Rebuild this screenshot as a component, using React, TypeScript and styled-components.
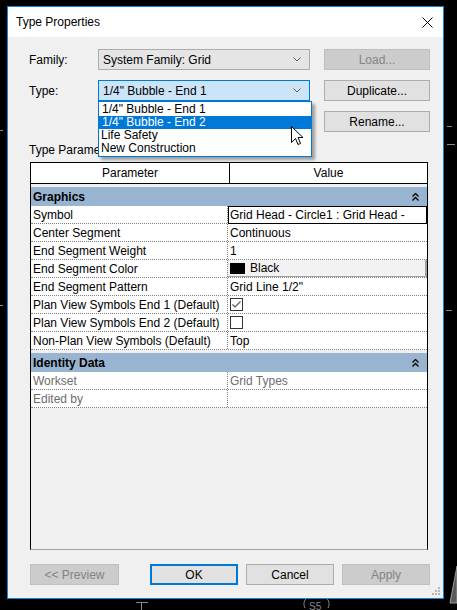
import React from 'react';
import styled, { createGlobalStyle } from 'styled-components';

const GlobalStyle = createGlobalStyle`
  html, body {
    margin: 0;
    padding: 0;
    background: #000;
  }
  body {
    font-family: "Liberation Sans", Arial, sans-serif;
    font-size: 12px;
    color: #000;
    overflow: hidden;
  }
  * {
    box-sizing: border-box;
  }
`;

interface ParamRow {
  name: string;
  value?: string;
  kind?: 'text' | 'editor' | 'color' | 'check' | 'uncheck';
  muted?: boolean;
}

interface ParamGroup {
  title: string;
  rows: ParamRow[];
}

const groups: ParamGroup[] = [
  {
    title: 'Graphics',
    rows: [
      { name: 'Symbol', value: 'Grid Head - Circle1 : Grid Head -', kind: 'editor' },
      { name: 'Center Segment', value: 'Continuous' },
      { name: 'End Segment Weight', value: '1' },
      { name: 'End Segment Color', value: 'Black', kind: 'color' },
      { name: 'End Segment Pattern', value: 'Grid Line 1/2"' },
      { name: 'Plan View Symbols End 1 (Default)', kind: 'check' },
      { name: 'Plan View Symbols End 2 (Default)', kind: 'uncheck' },
      { name: 'Non-Plan View Symbols (Default)', value: 'Top' },
    ],
  },
  {
    title: 'Identity Data',
    rows: [
      { name: 'Workset', value: 'Grid Types', muted: true },
      { name: 'Edited by', value: '', muted: true },
    ],
  },
];

const typeOptions = ['1/4" Bubble - End 1', '1/4" Bubble - End 2', 'Life Safety', 'New Construction'];

const App: React.FC = () => (
  <>
    <GlobalStyle />
    <Page>
      <Backdrop />
      <Window>
        <TitleBar>
          <span>Type Properties</span>
          <CloseIcon />
        </TitleBar>
        <Content>
          <FieldRow>
            <FieldLabel>Family:</FieldLabel>
            <Combo>
              <span>System Family: Grid</span>
              <Chevron />
            </Combo>
            <DialogButton disabled>Load...</DialogButton>
          </FieldRow>
          <FieldRow>
            <FieldLabel>Type:</FieldLabel>
            <Combo active>
              <span>1/4" Bubble - End 1</span>
              <Chevron />
              <DropList>
                {typeOptions.map((opt, i) => (
                  <DropItem key={opt} selected={i === 1} indent={i < 2}>
                    {opt}
                  </DropItem>
                ))}
              </DropList>
              <Cursor />
            </Combo>
            <DialogButton>Duplicate...</DialogButton>
          </FieldRow>
          <FieldRow>
            <Spacer />
            <DialogButton>Rename...</DialogButton>
          </FieldRow>
          <SectionLabel>Type Parameters</SectionLabel>
          <Table>
            <HeaderRow>
              <HeaderCell>Parameter</HeaderCell>
              <HeaderCell>Value</HeaderCell>
            </HeaderRow>
            {groups.map((g) => (
              <React.Fragment key={g.title}>
                <GroupBar>
                  <span>{g.title}</span>
                  <Collapse />
                </GroupBar>
                {g.rows.map((r) => (
                  <Row key={r.name}>
                    <NameCell muted={r.muted}>{r.name}</NameCell>
                    <ValueCell muted={r.muted} kind={r.kind}>
                      {r.kind === 'color' && <Swatch />}
                      {r.kind === 'check' && <CheckBox checked />}
                      {r.kind === 'uncheck' && <CheckBox />}
                      {r.value}
                    </ValueCell>
                  </Row>
                ))}
              </React.Fragment>
            ))}
          </Table>
          <ButtonBar>
            <DialogButton disabled wide>
              &lt;&lt; Preview
            </DialogButton>
            <ButtonGroup>
              <DialogButton primary>OK</DialogButton>
              <DialogButton>Cancel</DialogButton>
              <DialogButton disabled>Apply</DialogButton>
            </ButtonGroup>
          </ButtonBar>
          <Grip />
        </Content>
      </Window>
    </Page>
  </>
);

const Backdrop: React.FC = () => (
  <BackdropSvg width="457" height="610" viewBox="0 0 457 610">
    <g stroke="#8a8a8a" strokeWidth="1" fill="none">
      <path d="M0 130.5h3M0 305.5h3" />
      <path d="M447 126.5h5M447 144.5h8M446 310.5h6" />
      <path d="M136 602.5h12M141.5 602v8" />
      <path d="M305 608c-2-4-1-8 2-10M326 598c3 2 4 6 2 10" />
    </g>
    <text x="309" y="610" fill="#8a8a8a" fontSize="10" fontFamily="Liberation Sans, sans-serif">S5</text>
    <path d="M450 603 L457 566 L457 603 Z" fill="#5a5a5a" stroke="#9a9a9a" strokeWidth="1" />
  </BackdropSvg>
);

const CloseIcon: React.FC = () => (
  <svg width="11" height="11" viewBox="0 0 11 11">
    <path d="M0.5 0.5 L10.5 10.5 M10.5 0.5 L0.5 10.5" stroke="#000" strokeWidth="1" />
  </svg>
);

const Chevron: React.FC = () => (
  <ChevronSvg width="8" height="5" viewBox="0 0 8 5">
    <path d="M0.5 0.5 L4 4 L7.5 0.5" stroke="#606060" strokeWidth="1" fill="none" />
  </ChevronSvg>
);

const Collapse: React.FC = () => (
  <svg width="7" height="8" viewBox="0 0 7 8">
    <path d="M0.5 3.5 L3.5 0.5 L6.5 3.5 M0.5 7.5 L3.5 4.5 L6.5 7.5" stroke="#000" strokeWidth="1.3" fill="none" />
  </svg>
);

const Cursor: React.FC = () => (
  <CursorSvg width="13" height="21" viewBox="0 0 13 21">
    <path
      d="M0.5 0.5 L0.5 16.5 L4.5 12.5 L7 18.5 L9.5 17.5 L7 11.5 L12 11.5 Z"
      fill="#fff"
      stroke="#000"
      strokeWidth="1"
      strokeLinejoin="round"
    />
  </CursorSvg>
);

const CheckBox: React.FC<{ checked?: boolean }> = ({ checked }) => (
  <BoxSvg width="13" height="13" viewBox="0 0 13 13">
    <rect x="0.5" y="0.5" width="12" height="12" fill="#fff" stroke="#333" />
    {checked && <path d="M2.5 6.5 L5 9 L10.5 3.5" stroke="#555" strokeWidth="1.2" fill="none" />}
  </BoxSvg>
);

const Grip: React.FC = () => (
  <GripSvg width="8" height="8" viewBox="0 0 8 8">
    <g fill="#b8b8b8">
      <rect x="6" y="0" width="2" height="2" />
      <rect x="3" y="3" width="2" height="2" />
      <rect x="6" y="3" width="2" height="2" />
      <rect x="0" y="6" width="2" height="2" />
      <rect x="3" y="6" width="2" height="2" />
      <rect x="6" y="6" width="2" height="2" />
    </g>
  </GripSvg>
);

const Page = styled.div`
  position: relative;
  width: 457px;
  height: 610px;
  padding: 6px 0 0 7px;
`;

const BackdropSvg = styled.svg`
  position: absolute;
  left: 0;
  top: 0;
`;

const Window = styled.div`
  position: relative;
  width: 437px;
  height: 593px;
  border: 1px solid #1883d7;
  background: #f0f0f0;
  display: flex;
  flex-direction: column;
`;

const TitleBar = styled.div`
  height: 30px;
  flex: none;
  background: #fff;
  display: flex;
  align-items: center;
  justify-content: space-between;
  padding: 0 10px 0 8px;
  font-size: 12px;
`;

const Content = styled.div`
  position: relative;
  flex: 1;
  display: flex;
  flex-direction: column;
  padding: 12px 0 13px 21px;
`;

const FieldRow = styled.div`
  display: flex;
  align-items: center;
  height: 21px;
  margin-bottom: 10px;
`;

const FieldLabel = styled.div`
  width: 69px;
`;

const Spacer = styled.div`
  width: 281px;
`;

const Combo = styled.div<{ active?: boolean }>`
  position: relative;
  width: 212px;
  height: 21px;
  display: flex;
  align-items: center;
  justify-content: space-between;
  padding: 0 8px 0 4px;
  background: ${(p) => (p.active ? '#cce4f7' : '#e5e5e5')};
  border: 1px solid ${(p) => (p.active ? '#0078d7' : '#acacac')};
`;

const ChevronSvg = styled.svg`
  flex: none;
`;

const DropList = styled.div`
  position: absolute;
  left: -1px;
  top: 20px;
  width: 214px;
  background: #fff;
  border: 1px solid #0078d7;
  padding: 1px 0;
  box-shadow: 3px 3px 3px rgba(0, 0, 0, 0.35);
  z-index: 2;
`;

const DropItem = styled.div<{ selected?: boolean; indent?: boolean }>`
  height: 13px;
  line-height: 13px;
  padding-left: ${(p) => (p.indent ? 3 : 2)}px;
  background: ${(p) => (p.selected ? '#0078d7' : 'transparent')};
  color: ${(p) => (p.selected ? '#fff' : '#000')};
  white-space: nowrap;
`;

const CursorSvg = styled.svg`
  position: absolute;
  left: 192px;
  top: 45px;
  z-index: 3;
`;

const DialogButton = styled.button<{ disabled?: boolean; primary?: boolean; wide?: boolean }>`
  width: ${(p) => (p.wide ? 89 : 106)}px;
  height: 21px;
  margin-left: 14px;
  padding: 0;
  font: inherit;
  color: ${(p) => (p.disabled ? '#838383' : '#000')};
  background: ${(p) => (p.disabled ? '#cccccc' : '#e1e1e1')};
  border: ${(p) => (p.primary ? '2px solid #0078d7' : `1px solid ${p.disabled ? '#bfbfbf' : '#adadad'}`)};
`;

const SectionLabel = styled.div`
  margin-top: 1px;
  height: 19px;
  line-height: 14px;
`;

const Table = styled.div`
  width: 398px;
  margin-left: 1px;
  flex: 1;
  background: #f0f0f0;
  border-left: 1px solid #000;
  border-right: 1px solid #000;
  border-bottom: 1px solid #a0a0a0;
`;

const HeaderRow = styled.div`
  display: grid;
  grid-template-columns: 198px 1fr;
  height: 22px;
  border-top: 1px solid #000;
  border-bottom: 1px solid #000;
  background: #fff;
  margin-bottom: 3px;
`;

const HeaderCell = styled.div`
  display: flex;
  align-items: center;
  justify-content: center;
  & + & {
    border-left: 1px solid #000;
  }
`;

const GroupBar = styled.div`
  height: 19px;
  display: flex;
  align-items: center;
  justify-content: space-between;
  padding: 0 8px 0 2px;
  background: #99b4d1;
  font-weight: bold;
  & + & {
    margin-top: 0;
  }
  &:not(:nth-child(2)) {
    margin-top: 3px;
  }
`;

const Row = styled.div`
  display: grid;
  grid-template-columns: 197px 1fr;
  height: 18px;
  background: #fff;
  border-bottom: 1px dotted #808080;
`;

const NameCell = styled.div<{ muted?: boolean }>`
  display: flex;
  align-items: center;
  padding-left: 2px;
  color: ${(p) => (p.muted ? '#6d6d6d' : '#000')};
  border-right: 1px dotted #808080;
  white-space: nowrap;
`;

const ValueCell = styled.div<{ muted?: boolean; kind?: ParamRow['kind'] }>`
  display: flex;
  align-items: center;
  gap: 5px;
  padding-left: 2px;
  color: ${(p) => (p.muted ? '#6d6d6d' : '#000')};
  white-space: nowrap;
  overflow: hidden;
  ${(p) => (p.kind === 'editor' ? 'border: 1px solid #000; padding-left: 1px; margin-bottom: -1px;' : '')}
  ${(p) =>
    p.kind === 'color'
      ? 'background: #f2f2f2; border-right: 2px solid #a0a0a0; border-bottom: 1px solid #a0a0a0;'
      : ''}
`;

const Swatch = styled.span`
  width: 15px;
  height: 11px;
  background: #000;
  flex: none;
`;

const BoxSvg = styled.svg`
  flex: none;
`;

const ButtonBar = styled.div`
  display: flex;
  align-items: center;
  margin-top: 14px;
  height: 21px;
  & > button:first-child {
    margin-left: 1px;
    width: 89px;
  }
`;

const ButtonGroup = styled.div`
  display: flex;
  margin-left: 31px;
  gap: 8px;
  & > button {
    margin-left: 0;
    width: 88px;
  }
`;

const GripSvg = styled.svg`
  position: absolute;
  right: 3px;
  bottom: 3px;
`;

export default App;
